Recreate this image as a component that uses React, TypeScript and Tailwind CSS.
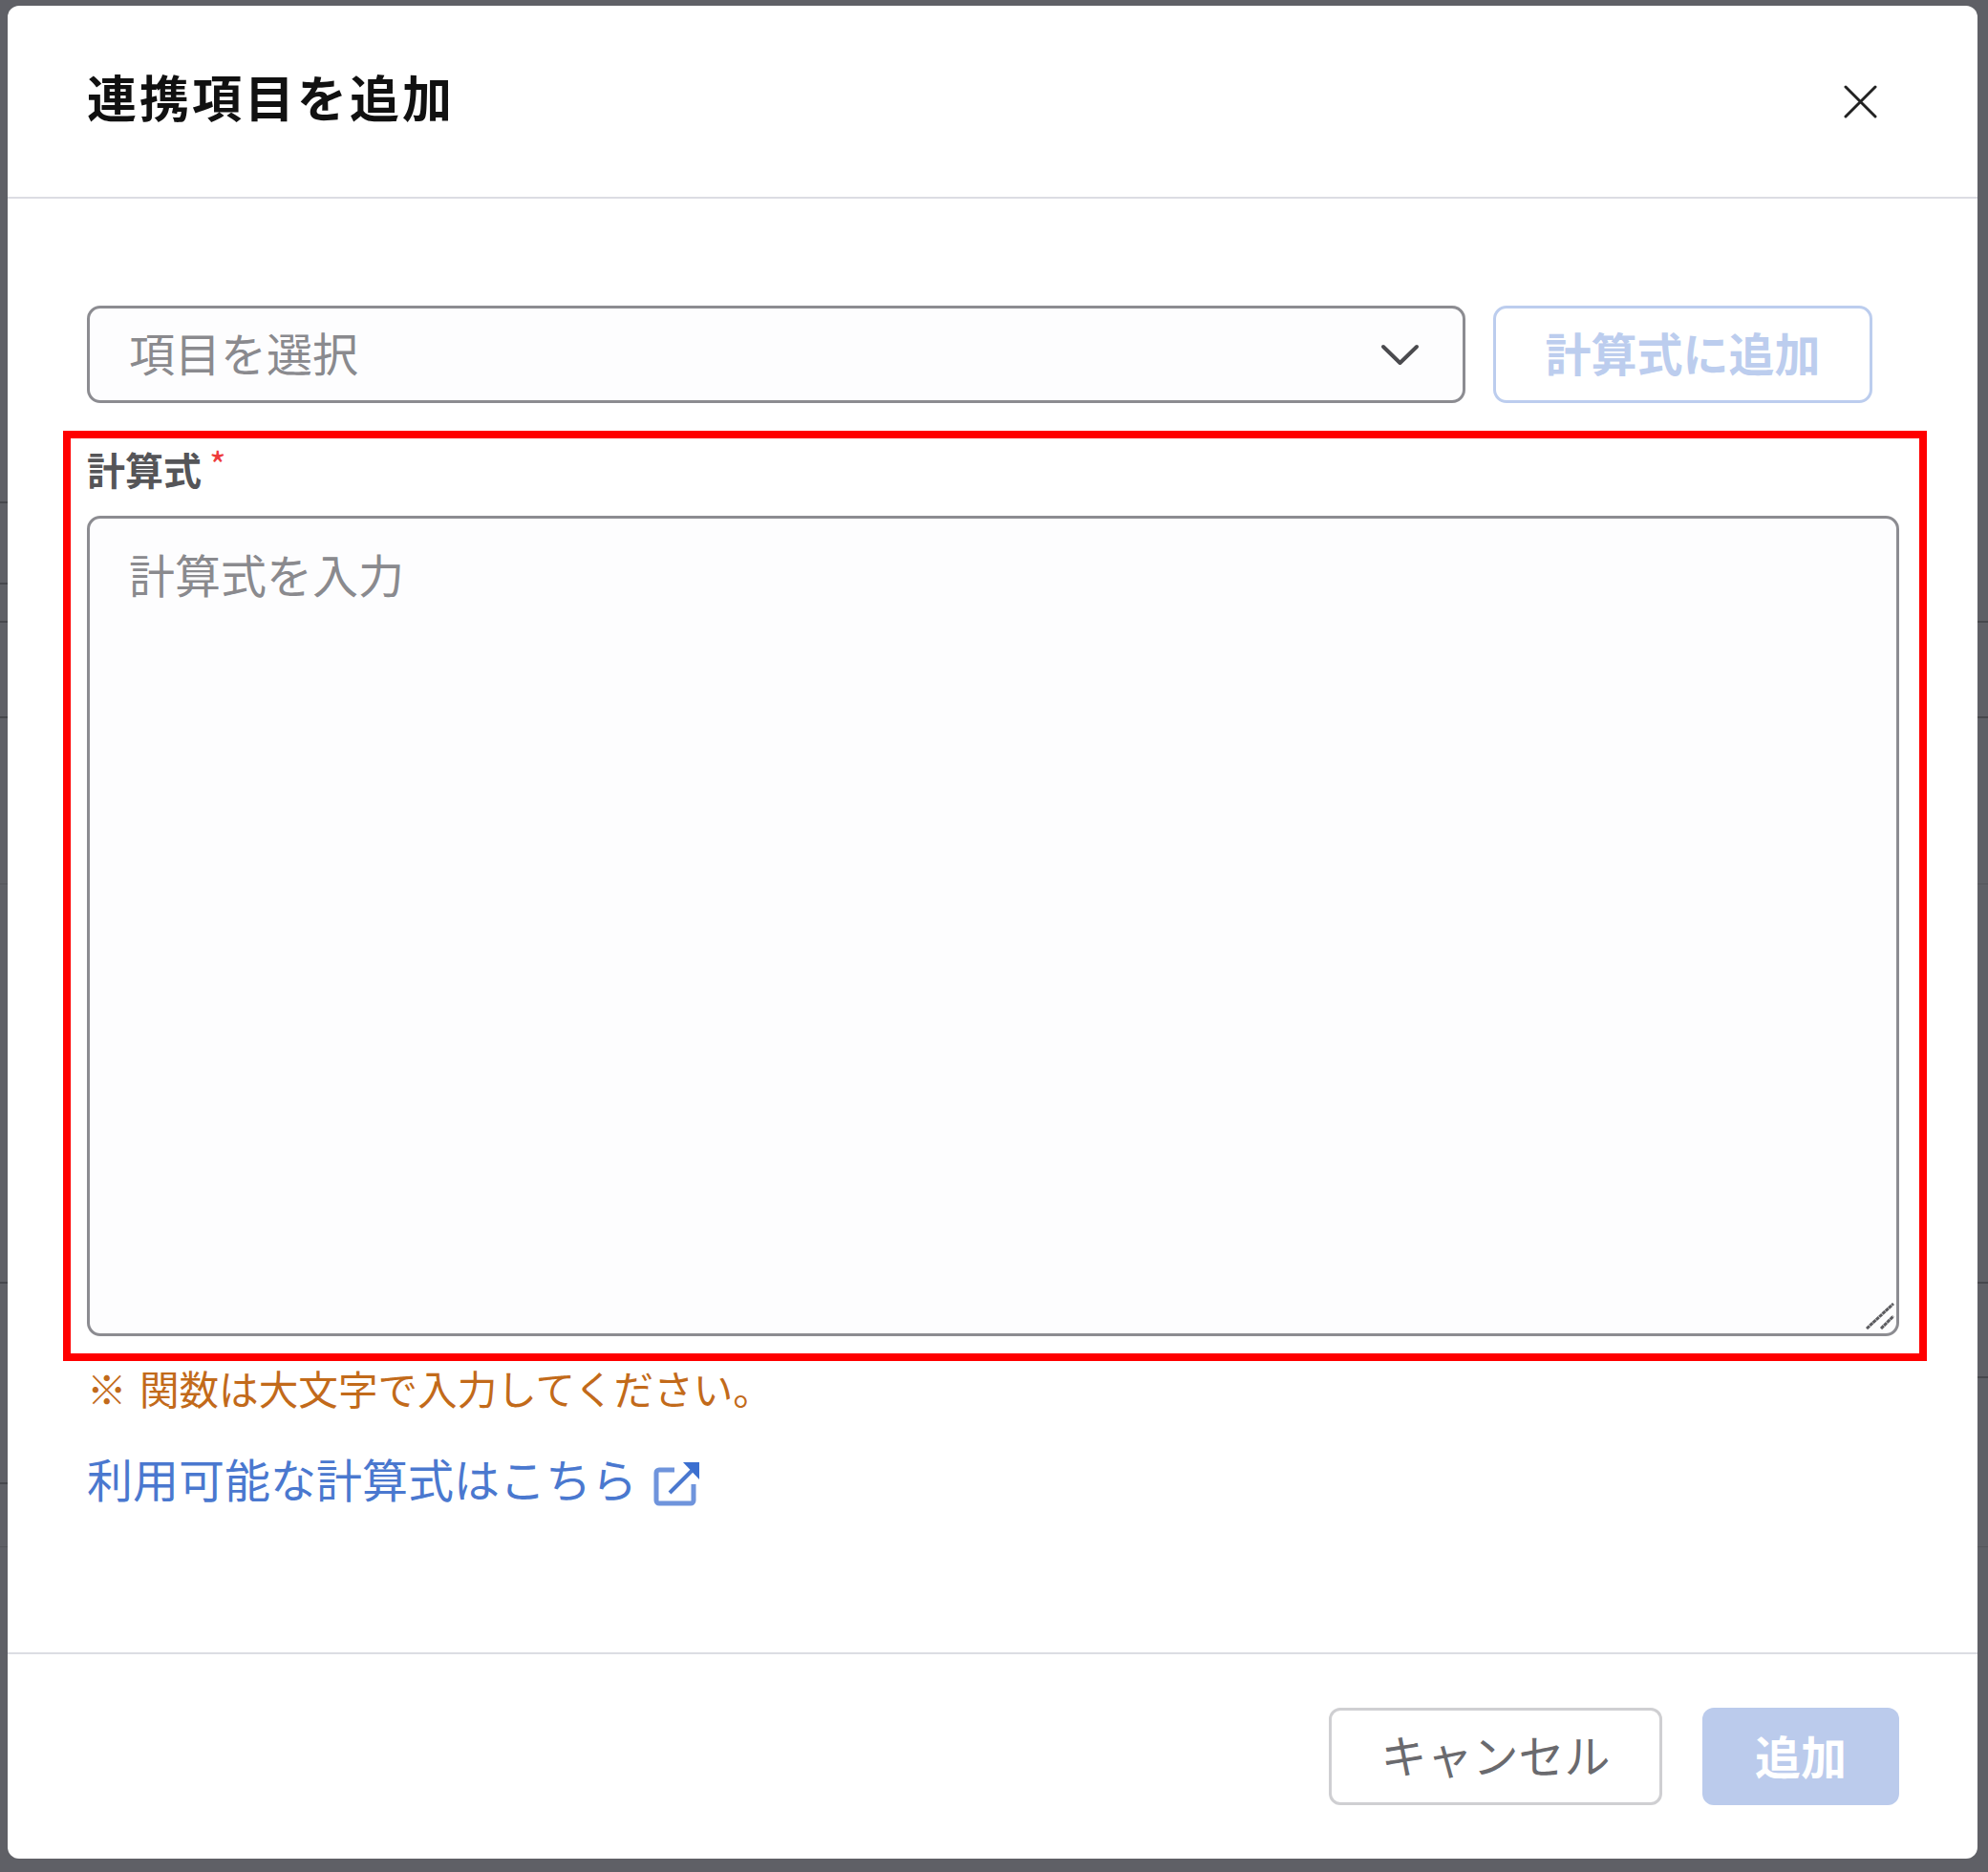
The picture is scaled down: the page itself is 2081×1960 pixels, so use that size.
const fontStack = "font-['Noto_Sans_CJK_JP','Noto_Sans',sans-serif]";

export default function App() {
  return (
    <div className={`relative w-[2081px] h-[1960px] overflow-hidden bg-[#5f6066] pt-[6px] pl-[8px] ${fontStack}`}>
      {/* table rows of the page behind the overlay */}
      <div className="absolute left-0 top-[525px] w-[8px] h-[2px] bg-[#47484d]" />
      <div className="absolute left-0 top-[610px] w-[8px] h-[2px] bg-[#47484d]" />
      <div className="absolute left-0 top-[650px] w-full h-[2px] bg-[#47484d]" />
      <div className="absolute left-0 top-[750px] w-full h-[2px] bg-[#47484d]" />
      <div className="absolute left-0 top-[925px] w-full h-[1px] bg-[#55565b]" />
      <div className="absolute left-0 top-[1342px] w-full h-[2px] bg-[#47484d]" />
      <div className="absolute left-0 top-[1552px] w-[8px] h-[2px] bg-[#47484d]" />
      <div className="absolute right-0 top-[1441px] w-[11px] h-[2px] bg-[#47484d]" />
      <div className="absolute left-0 top-[1619px] w-full h-[1px] bg-[#55565b]" />

      {/* Modal */}
      <div className="relative flex flex-col w-[2062px] h-[1940px] rounded-[12px] bg-white">
        {/* Header */}
        <div className="flex items-center justify-between h-[202px] pl-[83px] pr-[105px] border-b-2 border-[#dcdde3]">
          <h1 className="pb-[10px] text-[52px] leading-[70px] font-bold tracking-[3px] text-[#111]">連携項目を追加</h1>
          <svg width="35" height="35" viewBox="0 0 35 35" fill="none" stroke="#222" strokeWidth="3" strokeLinecap="round">
            <path d="M2 2 33 33M33 2 2 33" />
          </svg>
        </div>

        {/* Body */}
        <div className="flex-1 flex flex-col">
          <div className="flex gap-[29px] mt-[112px] ml-[83px]">
            <div className="flex items-center justify-between w-[1443px] h-[102px] pl-[41px] pr-[45px] rounded-[14px] border-[3px] border-[#8c8c91] bg-[#fdfdfe]">
              <span className="pb-[6px] text-[48px] leading-[60px] text-[#8a8a8e]">項目を選択</span>
              <svg width="41" height="23" viewBox="0 0 41 23" fill="none" stroke="#4a4a4e" strokeWidth="4" strokeLinecap="round" strokeLinejoin="round">
                <path d="M3 3 20.500 20 38 3" />
              </svg>
            </div>
            <button className="w-[397px] h-[102px] pb-[7px] rounded-[14px] border-[3px] border-[#bccdee] bg-white text-[48px] leading-[60px] font-bold text-[#bccdee]">
              計算式に追加
            </button>
          </div>

          {/* Red highlight box */}
          <div className="w-[1951px] h-[974px] mt-[29px] ml-[58px] border-[8px] border-[#ff0000] pl-[17px] pt-[7px]">
            <label className="flex h-[50px] text-[40px] leading-[50px] font-bold text-[#555558]">
              計算式
              <span className="ml-[8px] text-[38px] leading-[40px] font-normal text-[#ee3b3b]">*</span>
            </label>
            <div className="relative mt-[24px] w-[1897px] h-[859px]">
              <textarea
                placeholder="計算式を入力"
                className="block w-full h-full resize-none rounded-[14px] border-[3px] border-[#8c8c91] bg-[#fdfdfe] pl-[41px] pt-[27px] text-[48px] leading-[60px] outline-none placeholder:text-[#8a8a8e]"
              />
              <svg className="absolute right-[5px] bottom-[7px]" width="30" height="28" viewBox="0 0 30 28" fill="none" stroke="#5c5c60" strokeWidth="3" strokeDasharray="4 0.500">
                <path d="M1 27 29 1M16 27 29 14" />
              </svg>
            </div>
          </div>

          <p className="mt-[3px] ml-[83px] text-[41.6px] leading-[50px] text-[#c26a1a]">
            ※ <span className="ml-[4px]">関数は大文字で入力してください。</span>
          </p>

          <a className="flex items-center gap-[17px] mt-[39px] ml-[83px] text-[48px] leading-[60px] text-[#4a78cf]">
            利用可能な計算式はこちら
            <svg className="translate-y-[8px]" width="48" height="48" viewBox="0 0 48 48" fill="none">
              <path d="M22 8H6a3 3 0 0 0-3 3v29a3 3 0 0 0 3 3h33a3 3 0 0 0 3-3V23" stroke="#6f94dc" strokeWidth="5" />
              <path d="M17 32 40 9" stroke="#4a78cf" strokeWidth="4" />
              <path d="M31 0h17v18z" fill="#3b6fd0" />
            </svg>
          </a>
        </div>

        {/* Footer */}
        <div className="flex justify-end gap-[42px] h-[216px] pt-[56px] pr-[82px] border-t-2 border-[#dcdde3]">
          <button className="w-[349px] h-[102px] pb-[7px] rounded-[12px] border-[3px] border-[#cfcfd2] bg-white text-[48px] leading-[60px] text-[#6a6a6e]">
            キャンセル
          </button>
          <button className="w-[206px] h-[102px] pb-[5px] rounded-[12px] bg-[#bbcbec] text-[48px] leading-[60px] font-bold text-white">
            追加
          </button>
        </div>
      </div>
    </div>
  );
}
